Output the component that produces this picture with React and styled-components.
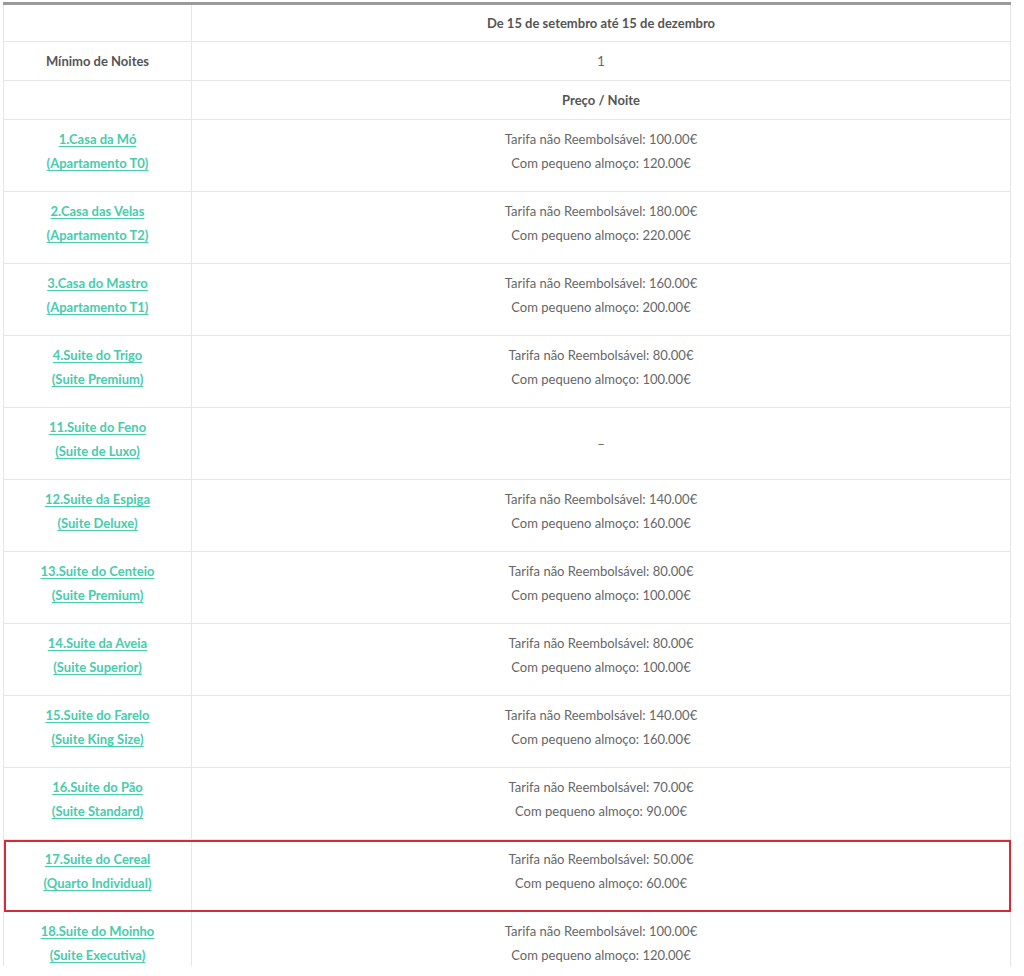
import React from "react";
import styled, { createGlobalStyle } from "styled-components";

const GlobalStyle = createGlobalStyle`
  html, body {
    margin: 0;
    padding: 0;
    background: #fff;
  }
  body {
    font-family: Lato, "Open Sans", "Liberation Sans", sans-serif;
  }
`;

// 페이지 래퍼 (스크린샷 잘림 재현)
const Page = styled.div`
  padding: 2px 13px 0 3px;
  height: 964px;
  overflow: hidden;
`;

const PriceTable = styled.table`
  width: 1008px;
  border-collapse: collapse;
  border-top: 3px solid #9a9a9a;
  font-size: 13px;
  line-height: 24px;
  color: #666;
  text-align: center;
`;

const Row = styled.tr`
  outline: ${(p) => (p.$highlight ? "2px solid #d52b36" : "none")};
  outline-offset: -2px;
`;

const Cell = styled.td`
  border: 1px solid #e6e6e6;
  padding: ${(p) => (p.$top ? "6px 8px" : "7px 8px")};
  vertical-align: middle;
  width: ${(p) => (p.$first ? "171px" : "auto")};
  font-weight: ${(p) => (p.$bold ? 700 : 400)};
  color: ${(p) => (p.$bold ? "#555" : "#666")};
`;

const Lines = styled.p`
  margin: 0 0 9px;
`;

const RoomLink = styled.a`
  color: #49cbad;
  font-weight: 700;
  text-decoration: underline;
  text-underline-offset: 2px;
  cursor: pointer;
`;

const rooms = [
  { name: "1.Casa da Mó", type: "(Apartamento T0)", rate: "100.00€", breakfast: "120.00€" },
  { name: "2.Casa das Velas", type: "(Apartamento T2)", rate: "180.00€", breakfast: "220.00€" },
  { name: "3.Casa do Mastro", type: "(Apartamento T1)", rate: "160.00€", breakfast: "200.00€" },
  { name: "4.Suite do Trigo", type: "(Suite Premium)", rate: "80.00€", breakfast: "100.00€" },
  { name: "11.Suite do Feno", type: "(Suite de Luxo)" },
  { name: "12.Suite da Espiga", type: "(Suite Deluxe)", rate: "140.00€", breakfast: "160.00€" },
  { name: "13.Suite do Centeio", type: "(Suite Premium)", rate: "80.00€", breakfast: "100.00€" },
  { name: "14.Suite da Aveia", type: "(Suite Superior)", rate: "80.00€", breakfast: "100.00€" },
  { name: "15.Suite do Farelo", type: "(Suite King Size)", rate: "140.00€", breakfast: "160.00€" },
  { name: "16.Suite do Pão", type: "(Suite Standard)", rate: "70.00€", breakfast: "90.00€" },
  { name: "17.Suite do Cereal", type: "(Quarto Individual)", rate: "50.00€", breakfast: "60.00€", highlight: true },
  { name: "18.Suite do Moinho", type: "(Suite Executiva)", rate: "100.00€", breakfast: "120.00€" },
];

const App = () => {
  return (
    <Page>
      <GlobalStyle />
      <PriceTable>
        <tbody>
          <tr>
            <Cell $first $top></Cell>
            <Cell $bold $top>De 15 de setembro até 15 de dezembro</Cell>
          </tr>
          <tr>
            <Cell $first $bold>Mínimo de Noites</Cell>
            <Cell>1</Cell>
          </tr>
          <tr>
            <Cell $first></Cell>
            <Cell $bold>Preço / Noite</Cell>
          </tr>
          {rooms.map((room) => (
            <Row key={room.name} $highlight={room.highlight}>
              <Cell $first>
                <Lines>
                  <RoomLink>{room.name}</RoomLink>
                  <br />
                  <RoomLink>{room.type}</RoomLink>
                </Lines>
              </Cell>
              <Cell>
                {room.rate ? (
                  <Lines>
                    Tarifa não Reembolsável: {room.rate}
                    <br />
                    Com pequeno almoço: {room.breakfast}
                  </Lines>
                ) : (
                  "–"
                )}
              </Cell>
            </Row>
          ))}
        </tbody>
      </PriceTable>
    </Page>
  );
};

export default App;
